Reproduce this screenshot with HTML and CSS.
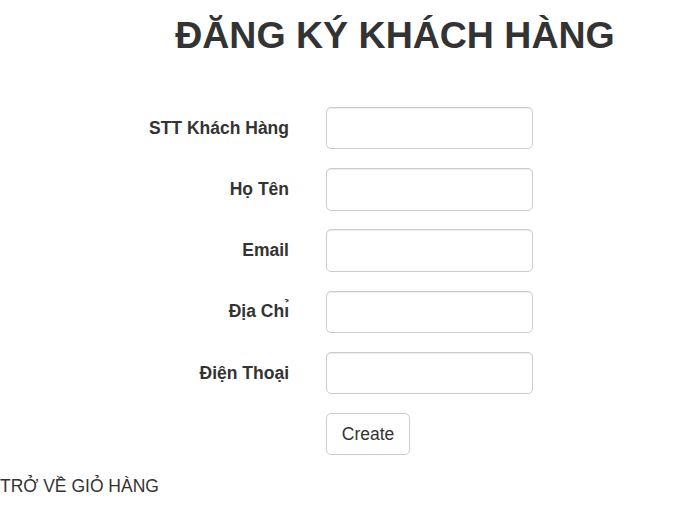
FILE: index.html
```html
<!DOCTYPE html>
<html lang="vi">
<head>
<meta charset="utf-8">
<title>Đăng ký khách hàng</title>
<link rel="stylesheet" href="styles.css">
</head>
<body>
<h2 class="title">ĐĂNG KÝ KHÁCH HÀNG</h2>
<form class="form">
  <div class="row">
    <label class="label">STT Khách Hàng</label>
    <div class="field"><input class="input" type="text"></div>
  </div>
  <div class="row">
    <label class="label">Họ Tên</label>
    <div class="field"><input class="input" type="text"></div>
  </div>
  <div class="row">
    <label class="label">Email</label>
    <div class="field"><input class="input" type="text"></div>
  </div>
  <div class="row">
    <label class="label">Địa Chı̉</label>
    <div class="field"><input class="input" type="text"></div>
  </div>
  <div class="row">
    <label class="label">Điện Thoại</label>
    <div class="field"><input class="input" type="text"></div>
  </div>
  <div class="row">
    <span class="label"></span>
    <div class="field"><button class="btn" type="button">Create</button></div>
  </div>
</form>
<div class="back"><a class="back-link" href="#">TRỞ VỀ GIỎ HÀNG</a></div>
</body>
</html>
```

FILE: styles.css
```css
* { box-sizing: border-box; }
html, body { margin: 0; padding: 0; }
body {
  font-family: "Liberation Sans", Arial, sans-serif;
  font-size: 17.5px;
  line-height: 25px;
  color: #333;
  background: #fff;
}
.title {
  margin: 15px 0 0 0;
  padding-left: 93px;
  text-align: center;
  font-size: 37.5px;
  line-height: 41.25px;
  font-weight: 700;
  color: #333;
}
.form {
  margin-top: 50.5px;
}
.row {
  display: grid;
  grid-template-columns: 307px 1fr;
  margin-bottom: 18.75px;
}
.label {
  padding-top: 8.75px;
  padding-right: 18px;
  text-align: right;
  font-weight: 700;
}
.field {
  padding-left: 18.75px;
}
.input {
  display: block;
  width: 207.5px;
  height: 42.5px;
  padding: 7.5px 15px;
  font: inherit;
  color: #555;
  background: #fff;
  border: 1px solid #ccc;
  border-radius: 5px;
  box-shadow: inset 0 1px 1px rgba(0,0,0,.075);
}
.btn {
  display: inline-block;
  padding: 7.5px 15px;
  font: inherit;
  line-height: 25px;
  color: #333;
  background: #fff;
  border: 1px solid #ccc;
  border-radius: 5px;
}
.back-link {
  color: #333;
  text-decoration: none;
}
```
